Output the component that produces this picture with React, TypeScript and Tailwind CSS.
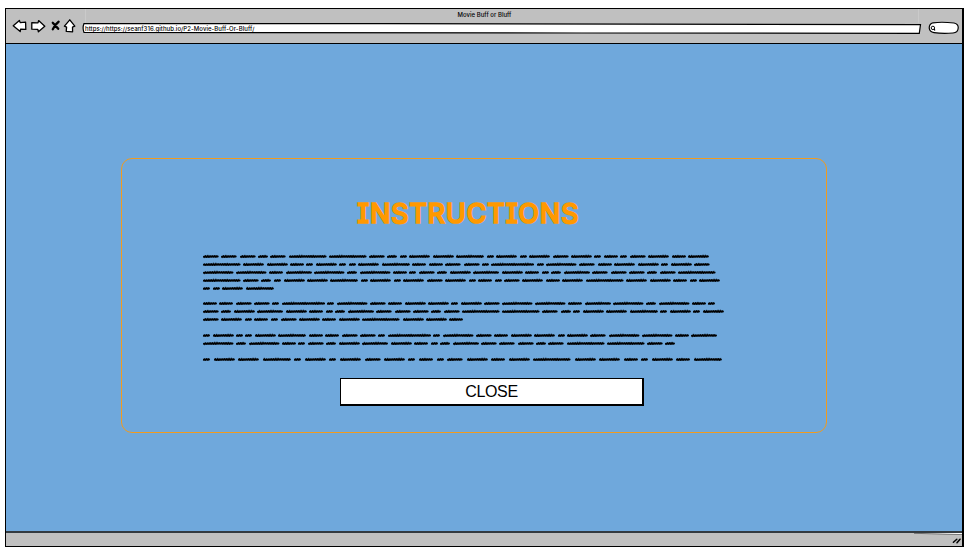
import React from "react";

const WORD_WIDTHS: Record<string, number> = {
  a: 6.7,
  b: 9.7,
  c: 13.7,
  d: 15.4,
  e: 20.6,
  f: 25.7,
  g: 27.6,
  h: 30.2,
  i: 37.3,
  j: 42.8,
};

type Line = { words: string; width: number };

const LINES: Line[] = [
  { words: "dddbdiidbaeegaeaedeacadece", width: 506 },
  { words: "ieecaeaaegccddajahdceeaed", width: 506.7 },
  { words: "hhcfhbhcadbefecabfdddbdi", width: 512.3 },
  { words: "idbaeegaeaedeacadeceieecae", width: 517 },
  { words: "aaeg", width: 70.7 },
  { words: "", width: 0 },
  { words: "ccddajahdceeaedhhcfhbhca", width: 512.3 },
  { words: "dbefecabfdddbdiidbaeegaeae", width: 520.3 },
  { words: "deacadeceieec", width: 260.3 },
  { words: "", width: 0 },
  { words: "aeaaegccddajahdceeaedhhcf", width: 514 },
  { words: "hbhcadbefecabfdddbdiidb", width: 472 },
  { words: "", width: 0 },
  { words: "aeegaeaedeacadeceieecaecg", width: 518.7 },
];

function Scribble({ kind }: { kind: string }) {
  const w = WORD_WIDTHS[kind];
  const reach = [1.2, 1.5, 0.9, 1.3, 1.6, 1.0, 1.4, 0.9, 1.2, 1.6, 1.1];
  let d = "M0.5 4.2";
  let n = kind.charCodeAt(0);
  for (let x = 1.3; x < w - 0.4; x += 1.15) {
    const h = reach[(n * 3) % reach.length];
    d += `L${x.toFixed(1)} ${(n % 2 ? 3.4 - h : 3.4 + h).toFixed(1)}`;
    n += 1;
  }
  return (
    <svg width={w} height="8" viewBox={`0 0 ${w} 8`} className="block shrink-0 overflow-visible">
      <path d={d} fill="none" stroke="#000" strokeWidth="0.7" strokeLinejoin="round" />
      <path d={`M1 3.8L${w * 0.5} 3.5L${w - 0.7} 3.5`} fill="none" stroke="#000" strokeWidth="2" strokeLinecap="round" />
    </svg>
  );
}

function NavIcons() {
  return (
    <svg width="66" height="20" viewBox="0 0 66 20" className="block" fill="#fff" stroke="#000" strokeWidth="1.3" strokeLinejoin="round">
      <path d="M1.2 9.8 L7.4 4.4 L8.2 6.6 L13.6 6.2 L13.8 13.4 L8.6 13.2 L8.2 15.6 Z" />
      <path d="M32.8 10.2 L26.6 4.6 L26 6.8 L19.8 6.6 L19.8 13.2 L25.8 13.4 L26.4 15.8 Z" />
      <path d="M40.8 6.8 Q42.8 8.6 46.2 12.8 M46.6 5.8 Q43.6 8 40.8 13.2" fill="none" strokeWidth="2.3" strokeLinecap="round" />
      <path d="M57.8 3.8 L52.4 10.2 L54.6 11.2 L54.2 15.4 L60.6 15.8 L60.5 11.2 L62.8 10.2 Z" />
    </svg>
  );
}

function AddressBar() {
  return (
    <div className="relative h-[12px] w-[840px]">
      <svg width="840" height="12" viewBox="0 0 840 12" className="absolute inset-0">
        <path d="M2 0.5 L300 0.7 L560 1.2 L838.5 1.6 L837.3 10.4 L500 10 L2 9.4 Q0.2 5 2 0.5Z" fill="#fff" stroke="#000" strokeWidth="1.2" />
      </svg>
      <div className="relative whitespace-nowrap pl-[3px] font-['Inter','Liberation_Sans',sans-serif] text-[6px] leading-[11px] font-medium tracking-[0.05px] text-black">
        https://https://seanf316.github.io/P2-Movie-Buff-Or-Bluff/
      </div>
    </div>
  );
}

export default function App() {
  return (
    <div className="h-[555px] w-[975px] overflow-hidden bg-white pl-[5px] pt-[8px]">
      <div className="flex h-[539px] w-[959px] flex-col border border-r-2 border-black bg-[#6fa8dc]">
        <header className="relative h-[35px] shrink-0 border-b border-black bg-[#c0c0c0]">
          <div className="h-[9px] pl-px text-center font-['Inter','Liberation_Sans',sans-serif] text-[6px] font-medium leading-[11px] tracking-[0.02px] text-black">
            Movie Buff or Bluff
          </div>
          <div className="flex items-start pl-[6px]">
            <div className="-mt-[2px] w-[70px]">
              <NavIcons />
            </div>
            <div className="mt-[5px]">
              <AddressBar />
            </div>
            <svg width="32" height="14" viewBox="0 0 32 14" className="ml-[6px] mt-[3px]" fill="#fff" stroke="#000">
              <path d="M5 1.8 Q14 0.6 26 2 Q30.5 3 30.2 7 Q30 11.6 25 12 Q14 12.8 6 11.6 Q1.6 11 1.2 7 Q1.2 3 5 1.8Z" strokeWidth="1.2" />
              <circle cx="4.9" cy="6.9" r="1.7" strokeWidth="1" />
              <path d="M6.4 8 L6.8 9.6" strokeWidth="1.1" />
            </svg>
          </div>
          <div className="absolute left-[79px] top-0 h-[14px] w-px bg-[#cacaca]" />
          <div className="absolute left-[912px] top-0 h-[14px] w-px bg-[#cacaca]" />
        </header>

        <main className="min-h-0 flex-1 pl-[115px] pt-[114px]">
          <section className="h-[275px] w-[706px] rounded-[11px] border border-[#f09b20] pl-[81px] pt-[38px]">
            <h1 className="ml-[154px] whitespace-nowrap font-['Inter','Liberation_Sans',sans-serif] text-[27px] font-medium leading-[34px] tracking-[0.72px] text-[#ff9900] [-webkit-text-stroke:1.7px_#ff9900] [font-feature-settings:'cv08']">
              INSTRUCTIONS
            </h1>
            <div className="mt-[22px] flex h-[125px] flex-col">
              {LINES.map((line, i) => (
                <div key={i} className="flex h-[7.9px] shrink-0 justify-between" style={{ width: line.width }}>
                  {line.words.split("").map((k, j) => (
                    <Scribble key={j} kind={k} />
                  ))}
                </div>
              ))}
            </div>
            <button className="ml-[137px] block h-[28px] w-[304px] border border-b-2 border-r-2 border-black bg-white font-['Liberation_Sans',Arial,sans-serif] text-[16px] leading-[24px] tracking-[-0.3px] text-black">
              CLOSE
            </button>
          </section>
        </main>

        <footer className="flex h-[15px] shrink-0 flex-col items-end justify-between border-t-2 border-[#333a40] bg-[#c0c0c0]">
          <svg width="48" height="2" viewBox="0 0 48 2" className="block shrink-0">
            <path d="M0 0 L48 0 L48 1.4 Z" fill="#fff" />
            <path d="M0 0.3 L48 1.6" stroke="#333" strokeWidth="0.6" />
          </svg>
          <svg width="12" height="9" viewBox="0 0 12 9" className="mb-px block" stroke="#000" strokeWidth="1.5" strokeLinecap="round">
            <path d="M3.4 6.2 L6.8 3.2 M7 6.8 L10 3.2" />
          </svg>
        </footer>
      </div>
    </div>
  );
}
